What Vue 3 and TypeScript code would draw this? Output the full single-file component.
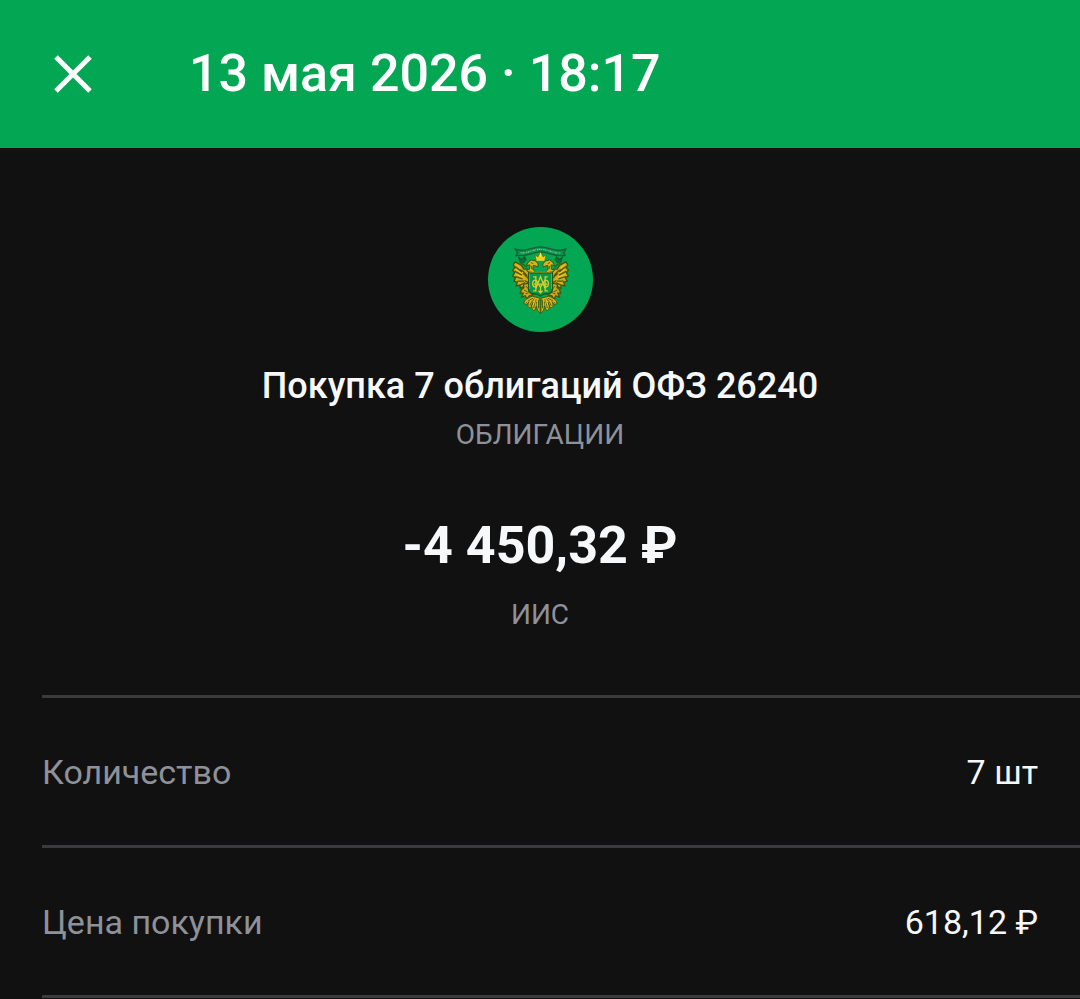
<script setup lang="ts">
interface Detail {
  label: string
  value: string
}

const details: Detail[] = [
  { label: 'Количество', value: '7 шт' },
  { label: 'Цена покупки', value: '618,12 ₽' },
]

const mirror = 'translate(364 0) scale(-1 1)'
</script>

<template>
  <div class="screen">
    <header class="bar">
      <button class="close" type="button" aria-label="Закрыть">
        <svg viewBox="0 0 40 40" aria-hidden="true">
          <path d="M3 3 37 37M37 3 3 37" fill="none" stroke="currentColor" stroke-width="5" />
        </svg>
      </button>
      <h1 class="date">13 мая 2026 · 18:17</h1>
    </header>

    <main>
      <section class="summary">
        <svg class="emblem" viewBox="24 21 316 316" aria-hidden="true">
          <defs>
            <g id="half-eagle">
              <!-- wing -->
              <path
                d="M152 160 142 148 132 148 124 136 106 126 100 134 105 144 98 150 104 159 98 168 107 174 102 184 112 187 109 198 120 196 121 206 132 199 138 206 150 192Z"
                fill="#d2ab18" stroke="#3f5410" stroke-width="4"
              />
              <path
                d="M106 140 126 156M104 154 126 166M106 170 128 177M112 184 132 184M121 196 136 188M122 146 142 168M130 160 146 176M134 182 147 190"
                fill="none" stroke="#4c5a0c" stroke-width="4"
              />
              <path d="M108 134 128 150M108 149 126 161M108 164 130 172" fill="none" stroke="#efcb22" stroke-width="3" />
              <!-- head and neck -->
              <path
                d="M167 158 159 147 160 137 167 138 174 142 175 132 167 123 154 120 145 127 140 137 150 135 149 148 140 152 148 160Z"
                fill="#d8b21a" stroke="#3f5410" stroke-width="3"
              />
              <path d="M153 128 160 131M154 138 157 149M143 155 156 157" fill="none" stroke="#5c620c" stroke-width="3" />
              <!-- small crown -->
              <path d="M117 113 125 119 134 111 138 119 130 128 121 126Z" fill="#067a3c" stroke="#155e2c" stroke-width="4" />
              <path d="M121 130 132 135 140 143" fill="none" stroke="#31651b" stroke-width="4" />
              <!-- leg and claw -->
              <path
                d="M145 190 131 194 132 204 125 209 121 221 130 220 125 232 136 228 141 238 148 228 159 225 150 214 153 202Z"
                fill="#cfa819" stroke="#46570f" stroke-width="4"
              />
              <path d="M138 199 145 207M132 211 143 216M137 222 146 219" fill="none" stroke="#595e0b" stroke-width="3" />
              <!-- tail feathers -->
              <path
                d="M180 235C171 233 164 231 157 229 145 235 134 239 132 250 136 258 144 253 147 246 141 258 145 268 155 261L159 248C153 260 156 272 163 273 169 267 170 255 171 246 168 262 173 276 181 280Z"
                fill="#d8b21a" stroke="#46570f" stroke-width="3"
              />
              <path
                d="M160 235 145 243M164 237C158 242 152 250 150 258M169 239C165 248 162 256 162 265M176 240 176 265M142 247 137 251"
                fill="none" stroke="#56600b" stroke-width="3"
              />
              <path d="M166 242 158 260M173 243 171 258" fill="none" stroke="#f6dc36" stroke-width="2" />
            </g>
          </defs>
          <circle cx="182" cy="179" r="158" fill="#03a652" />
          <!-- ribbon -->
          <path
            d="M106 88 124 91C144 92 159 82 182 81 205 82 220 92 240 91L258 88 252 98 256 107 240 107C219 108 205 97 182 96 159 97 145 108 124 107L108 107 113 98Z"
            fill="#07934b" stroke="#126039" stroke-width="4"
          />
          <path
            d="M122 99C145 100 158 89 182 88 206 89 219 100 242 99"
            fill="none" stroke="#75c78a" stroke-width="4" stroke-dasharray="3 2 5 2 2 3"
          />
          <use href="#half-eagle" />
          <use href="#half-eagle" :transform="mirror" />
          <!-- main crown -->
          <path
            d="M169 122 165 104 174 111 179 101 182 96 185 101 190 111 199 104 195 122Z"
            fill="#f2cf13" stroke="#56640d" stroke-width="2"
          />
          <path d="M170 122 194 122M182 100V112" fill="none" stroke="#fff06c" stroke-width="2" />
          <!-- shield with monogram -->
          <path
            d="M146 159H218V209C218 219 209 222 200 222 191 222 186 225 182 229 178 225 173 222 164 222 155 222 146 219 146 209Z"
            fill="#049a49" stroke="#25551a" stroke-width="4"
          />
          <path d="M149 157H215M149 161V207M215 161V207" fill="none" stroke="#c5aa17" stroke-width="2" />
          <path
            d="M160 171H168V213H160M204 171H196V213H204M168 207 182 170 196 207M168 180 182 202 196 180M162 193H202M182 199V217M176 213 182 219 188 213M168 180C155 181 155 202 168 202M196 180C209 181 209 202 196 202"
            fill="none" stroke="#dccb2c" stroke-width="4"
          />
          <path d="M182 276V283" stroke="#59640c" stroke-width="3" />
        </svg>
        <h2 class="name">Покупка 7 облигаций ОФЗ 26240</h2>
        <p class="note">ОБЛИГАЦИИ</p>
        <p class="amount">-4 450,32 ₽</p>
        <p class="note">ИИС</p>
      </section>

      <dl class="details">
        <div v-for="item in details" :key="item.label" class="row">
          <dt>{{ item.label }}</dt>
          <dd>{{ item.value }}</dd>
        </div>
      </dl>
    </main>
  </div>
</template>

<style>
body {
  margin: 0;
  background: #111111;
}
</style>

<style scoped>
.screen {
  background: #111111;
  color: #f7f8fa;
  font-family: Roboto, "Noto Sans", sans-serif;
}

.bar {
  display: flex;
  align-items: center;
  gap: 82px;
  height: 148px;
  padding: 0 39px;
  background: #03a652;
  color: #ffffff;
}

.close {
  display: flex;
  padding: 14px;
  border: 0;
  background: none;
  color: inherit;
  cursor: pointer;
}

.close svg {
  width: 40px;
  height: 40px;
}

.date,
.name,
.note,
.amount {
  margin: 0;
}

.date {
  font-size: 52px;
  line-height: 64px;
  font-weight: 500;
}

.summary {
  display: flex;
  flex-direction: column;
  align-items: center;
  padding: 79px 40px 60px;
  text-align: center;
}

.emblem {
  width: 105px;
  height: 105px;
}

.name {
  margin-top: 30px;
  font-size: 36px;
  line-height: 48px;
  font-weight: 500;
}

.note {
  margin-top: 5px;
  color: #8e9199;
  font-size: 28px;
  line-height: 40px;
}

.amount {
  margin-top: 59px;
  margin-bottom: 12px;
  font-size: 52px;
  line-height: 64px;
  font-weight: 700;
}

.details {
  margin: 0 0 0 42px;
  border-bottom: 3px solid #3b3b3d;
}

.row {
  display: flex;
  align-items: center;
  justify-content: space-between;
  height: 147px;
  padding-right: 42px;
  border-top: 3px solid #3b3b3d;
  font-size: 34px;
  line-height: 48px;
}

dt {
  color: #8e9199;
}

dd {
  margin: 0;
}
</style>
